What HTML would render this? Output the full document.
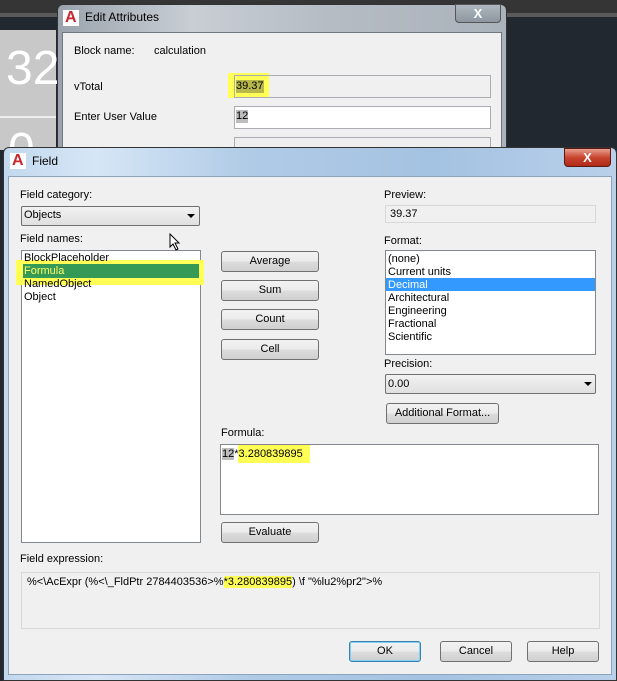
<!DOCTYPE html>
<html><head><meta charset="utf-8"><style>
*{margin:0;padding:0;box-sizing:border-box}
body{width:617px;height:681px;overflow:hidden;background:#212830;font-family:"Liberation Sans",sans-serif;font-size:11px;color:#000;position:relative}
.a{position:absolute}
.t{position:absolute;white-space:nowrap;line-height:13px}
.btn{position:absolute;border:1px solid #707070;border-radius:3px;background:linear-gradient(#f2f2f2 0%,#ebebeb 50%,#dddddd 51%,#cfcfcf 100%);text-align:center;line-height:18px;font-size:11px}
.box{position:absolute;background:#fff;border:1px solid #abadb3}
.logo{position:absolute;width:16px;height:16px;background:#fff}
.logo:after{content:"A";position:absolute;left:2px;top:-1px;font:bold 16px "Liberation Sans",sans-serif;color:#c8282e}
</style></head><body>
<div class="a" style="left:0;top:0;width:617px;height:13px;background:#353535"></div>
<div class="a" style="left:0;top:13px;width:617px;height:4px;background:#5a5a5a"></div>
<div class="a" style="left:0;top:30px;width:56px;height:120px;background:#c8c8c8"></div>
<div class="a" style="left:0;top:116px;width:56px;height:2px;background:#eee"></div>
<div class="t" style="left:6px;top:44px;font-size:48px;line-height:50px;color:#fff">32</div>
<div class="t" style="left:8px;top:126px;font-size:48px;line-height:50px;color:#fff">0</div>

<!-- Edit Attributes -->
<div class="a" style="left:57px;top:4px;width:450px;height:150px;background:linear-gradient(90deg,#9aa3ad,#c9ced4 30%,#b5bcc4 60%,#aab2bb);border:1px solid #333;border-radius:6px 6px 0 0"></div>
<div class="logo" style="left:63px;top:10px"></div>
<div class="t" style="left:85px;top:11px;font-size:12px">Edit Attributes</div>
<div class="a" style="left:455px;top:4px;width:46px;height:19px;border:1px solid #555;border-radius:0 0 4px 4px;background:linear-gradient(#aeb6be,#8e979f);color:#fff;font-weight:bold;font-size:13px;text-align:center;line-height:17px">X</div>
<div class="a" style="left:62px;top:32px;width:440px;height:130px;background:#f0f0f0;border:1px solid #707780"></div>
<div class="t" style="left:74px;top:45px">Block name:</div>
<div class="t" style="left:154px;top:45px">calculation</div>
<div class="t" style="left:74px;top:81px">vTotal</div>
<div class="a" style="left:228px;top:73px;width:41px;height:25px;background:#ffff55"></div>
<div class="box" style="left:234px;top:75px;width:257px;height:23px;background:transparent"></div>
<div class="t" style="left:236px;top:80px;background:#b8b84a">39.37</div>
<div class="t" style="left:74px;top:111px">Enter User Value</div>
<div class="box" style="left:234px;top:106px;width:257px;height:23px"></div>
<div class="t" style="left:236px;top:110px;background:#bdbdbd">12</div>
<div class="box" style="left:234px;top:137px;width:257px;height:20px;background:#eee"></div>

<!-- Field dialog -->
<div class="a" style="left:3px;top:147px;width:614px;height:534px;border:1px solid #333;border-radius:6px 6px 0 0;background:linear-gradient(90deg,#c2d8ee,#d6e6f6 15%,#b0cbe6 40%,#a4c2e2 70%,#b9d0ea)"></div>
<div class="logo" style="left:10px;top:153px"></div>
<div class="t" style="left:32px;top:155px;font-size:12px">Field</div>
<div class="a" style="left:564px;top:148px;width:47px;height:19px;border:1px solid #5a1a12;border-radius:0 0 4px 4px;background:linear-gradient(#e8a090,#c8442e 50%,#b02a18);color:#fff;font-weight:bold;font-size:13px;text-align:center;line-height:17px">X</div>
<div class="a" style="left:8px;top:176px;width:604px;height:499px;background:#f0f0f0;border:1px solid #8ea4bd"></div>

<div class="t" style="left:20px;top:189px">Field category:</div>
<div class="a" style="left:21px;top:206px;width:179px;height:20px;border:1px solid #707070;border-radius:2px;background:linear-gradient(#f2f2f2,#e0e0e0)"></div>
<div class="t" style="left:24px;top:209px">Objects</div>
<div class="a" style="left:187px;top:214px;width:0;height:0;border-left:4px solid transparent;border-right:4px solid transparent;border-top:4px solid #000"></div>
<div class="t" style="left:20px;top:233px">Field names:</div>
<div class="box" style="left:21px;top:250px;width:180px;height:293px;border-color:#828790"></div>
<div class="a" style="left:16px;top:260px;width:188px;height:25px;background:#ffff55"></div>
<div class="a" style="left:23px;top:264px;width:176px;height:14px;background:#359a55"></div>
<div class="t" style="left:24px;top:252px">BlockPlaceholder</div>
<div class="t" style="left:24px;top:265px;color:#ffff66">Formula</div>
<div class="t" style="left:24px;top:278px">NamedObject</div>
<div class="t" style="left:24px;top:291px">Object</div>
<svg class="a" style="left:169px;top:233px" width="12" height="18"><path d="M1 1 L1 14 L4 11 L7 17 L9 16 L6 10 L10 10 Z" fill="#fff" stroke="#000" stroke-width="1"/></svg>

<div class="btn" style="left:221px;top:251px;width:98px;height:21px">Average</div>
<div class="btn" style="left:221px;top:280px;width:98px;height:21px">Sum</div>
<div class="btn" style="left:221px;top:309px;width:98px;height:21px">Count</div>
<div class="btn" style="left:221px;top:339px;width:98px;height:21px">Cell</div>

<div class="t" style="left:384px;top:189px">Preview:</div>
<div class="a" style="left:385px;top:205px;width:211px;height:18px;border:1px solid #d8d8d8;background:#f0f0f0"></div>
<div class="t" style="left:390px;top:208px">39.37</div>
<div class="t" style="left:384px;top:235px">Format:</div>
<div class="box" style="left:385px;top:250px;width:211px;height:105px;border-color:#828790"></div>
<div class="a" style="left:386px;top:278px;width:209px;height:13px;background:#3399ff"></div>
<div class="t" style="left:388px;top:253px">(none)</div>
<div class="t" style="left:388px;top:266px">Current units</div>
<div class="t" style="left:388px;top:279px;color:#fff">Decimal</div>
<div class="t" style="left:388px;top:292px">Architectural</div>
<div class="t" style="left:388px;top:305px">Engineering</div>
<div class="t" style="left:388px;top:318px">Fractional</div>
<div class="t" style="left:388px;top:331px">Scientific</div>
<div class="t" style="left:384px;top:358px">Precision:</div>
<div class="a" style="left:385px;top:374px;width:211px;height:20px;border:1px solid #707070;border-radius:2px;background:linear-gradient(#f2f2f2,#e0e0e0)"></div>
<div class="t" style="left:388px;top:378px">0.00</div>
<div class="a" style="left:584px;top:382px;width:0;height:0;border-left:4px solid transparent;border-right:4px solid transparent;border-top:4px solid #000"></div>
<div class="btn" style="left:386px;top:403px;width:113px;height:21px">Additional Format...</div>

<div class="t" style="left:221px;top:427px">Formula:</div>
<div class="box" style="left:220px;top:444px;width:379px;height:71px;border-color:#828790"></div>
<div class="a" style="left:238px;top:445px;width:72px;height:18px;background:#ffff55"></div>
<div class="t" style="left:222px;top:448px"><span style="background:#bdbdbd">12</span>*3.280839895</div>
<div class="btn" style="left:221px;top:522px;width:98px;height:21px">Evaluate</div>

<div class="t" style="left:20px;top:553px">Field expression:</div>
<div class="a" style="left:21px;top:572px;width:579px;height:57px;border:1px solid #d8d8d8;background:#f0f0f0"></div>
<div class="t" style="left:27px;top:576px">%&lt;\AcExpr (%&lt;\_FldPtr 2784403536&gt;%<span style="background:#ffff55">*3.280839895</span>) \f "%lu2%pr2"&gt;%</div>

<div class="btn" style="left:349px;top:641px;width:72px;height:21px;border-color:#3c7fb1;box-shadow:inset 0 0 0 1px #7fd0f4">OK</div>
<div class="btn" style="left:440px;top:641px;width:72px;height:21px">Cancel</div>
<div class="btn" style="left:527px;top:641px;width:72px;height:21px">Help</div>
</body></html>
